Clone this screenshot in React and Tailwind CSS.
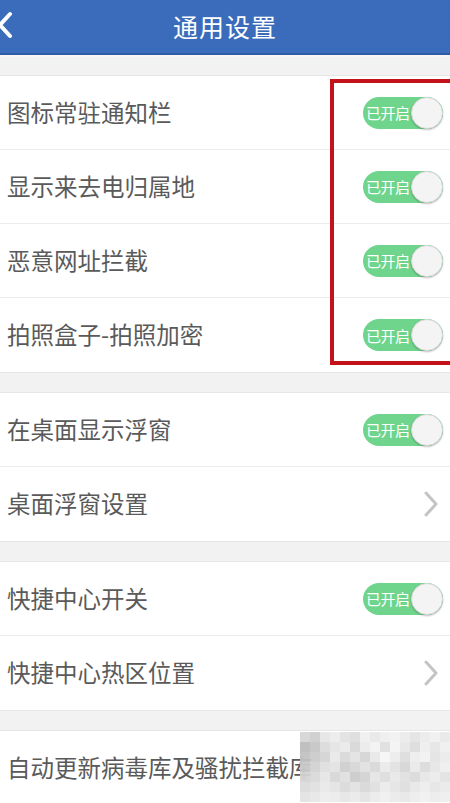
import React from "react";

const font = { fontFamily: '"Noto Sans CJK SC", "Noto Sans", sans-serif' };

function Toggle() {
  return (
    <div className="relative flex items-center w-[80px] h-[32px] rounded-full bg-[#6fd58c]">
      <span className="pl-[3px] text-[15px] leading-none text-white tracking-[-0.5px]">已开启</span>
      <div className="absolute right-0 top-0 w-[32px] h-[32px] rounded-full bg-[#f4f4f4] border border-[#d8d8d8] shadow-[0_1px_2px_rgba(0,0,0,0.25)]" />
    </div>
  );
}

function Chevron() {
  return (
    <svg width="14" height="26" viewBox="0 0 14 26" className="mr-[5px]">
      <path d="M2 2 L12 13 L2 24" fill="none" stroke="#c4c4c4" strokeWidth="3" strokeLinecap="round" strokeLinejoin="round" />
    </svg>
  );
}

function Row({ label, right, last }) {
  return (
    <div className={`flex items-center justify-between h-[74px] pl-[7px] pr-[7px] ${last ? "" : "border-b border-[#ececec]"}`}>
      <span className="text-[23.5px] text-[#5a5a5a] whitespace-nowrap overflow-hidden">{label}</span>
      {right === "toggle" ? <Toggle /> : right === "chevron" ? <Chevron /> : null}
    </div>
  );
}

const shades = [
  "#d6d6d6","#cfcfcf","#e6e6e6","#ededed","#e2e2e2","#dedede","#f0f0f0","#e8e8e8","#efefef","#f2f2f2","#ebebeb","#e4e4e4","#ececec","#f1f1f1","#e9e9e9",
  "#bdbdbd","#c7c7c7","#dcdcdc","#e5e5e5","#eaeaea","#d9d9d9","#ececec","#f3f3f3","#e0e0e0","#f4f4f4","#e7e7e7","#dddddd","#efefef","#e6e6e6","#f0f0f0",
  "#c2c2c2","#cccccc","#d4d4d4","#e9e9e9","#dadada","#e3e3e3","#d5d5d5","#e8e8e8","#f6f6f6","#ededed","#dedede","#eeeeee","#f2f2f2","#e4e4e4","#ebebeb",
  "#c9c9c9","#d2d2d2","#dfdfdf","#e3e3e3","#cfcfcf","#d8d8d8","#e1e1e1","#d9d9d9","#eaeaea","#e2e2e2","#d6d6d6","#e9e9e9","#dcdcdc","#e6e6e6","#efefef",
  "#d4d4d4","#dadada","#e6e6e6","#d7d7d7","#e0e0e0","#cccccc","#d3d3d3","#e5e5e5","#dedede","#e8e8e8","#e1e1e1","#dbdbdb","#e7e7e7","#ececec","#e3e3e3",
  "#dcdcdc","#e1e1e1","#e9e9e9","#e4e4e4","#dbdbdb","#e2e2e2","#d9d9d9","#e0e0e0","#ebebeb","#e5e5e5","#dfdfdf","#e8e8e8","#eeeeee","#e6e6e6","#eaeaea",
  "#e3e3e3","#e7e7e7","#eeeeee","#ebebeb","#e6e6e6","#eaeaea","#e4e4e4","#ececec","#f0f0f0","#eaeaea","#e8e8e8","#eeeeee","#f1f1f1","#ededed","#efefef",
];

export default function App() {
  return (
    <div className="relative w-[450px] h-[803px] overflow-hidden bg-[#f2f2f2]" style={font}>
      {/* Header */}
      <div className="relative flex items-center justify-center h-[55px] bg-[#3b6cbc] border-b-2 border-[#2f5ba3]">
        <svg width="16" height="28" viewBox="0 0 16 28" className="absolute left-[-3px] top-[11px]">
          <path d="M13 3 L3 14 L13 25" fill="none" stroke="#ffffff" strokeWidth="4" strokeLinecap="round" strokeLinejoin="round" />
        </svg>
        <span className="text-[25px] text-white tracking-[1px]">通用设置</span>
      </div>
      <div className="h-[2px] bg-[#fbf4f6]" />

      <div className="flex flex-col gap-[19px] pt-[18px]">
        <div className="bg-white border-y border-[#e6e6e6]">
          <Row label="图标常驻通知栏" right="toggle" />
          <Row label="显示来去电归属地" right="toggle" />
          <Row label="恶意网址拦截" right="toggle" />
          <Row label="拍照盒子-拍照加密" right="toggle" last />
        </div>
        <div className="bg-white border-y border-[#e6e6e6]">
          <Row label="在桌面显示浮窗" right="toggle" />
          <Row label="桌面浮窗设置" right="chevron" last />
        </div>
        <div className="bg-white border-y border-[#e6e6e6]">
          <Row label="快捷中心开关" right="toggle" />
          <Row label="快捷中心热区位置" right="chevron" last />
        </div>
        <div className="bg-white border-y border-[#e6e6e6]">
          <Row label="自动更新病毒库及骚扰拦截库" last />
        </div>
      </div>

      {/* Red highlight box */}
      <div className="absolute left-[330px] top-[79px] w-[140px] h-[286px] border-4 border-[#c4121b]" />

      {/* Watermark mosaic */}
      <div className="absolute left-[300px] top-[732px] w-[150px] h-[71px] grid grid-cols-[repeat(15,10px)] grid-rows-[repeat(7,10px)] opacity-95">
        {shades.map((c, i) => (
          <div key={i} style={{ backgroundColor: c }} />
        ))}
      </div>
    </div>
  );
}
